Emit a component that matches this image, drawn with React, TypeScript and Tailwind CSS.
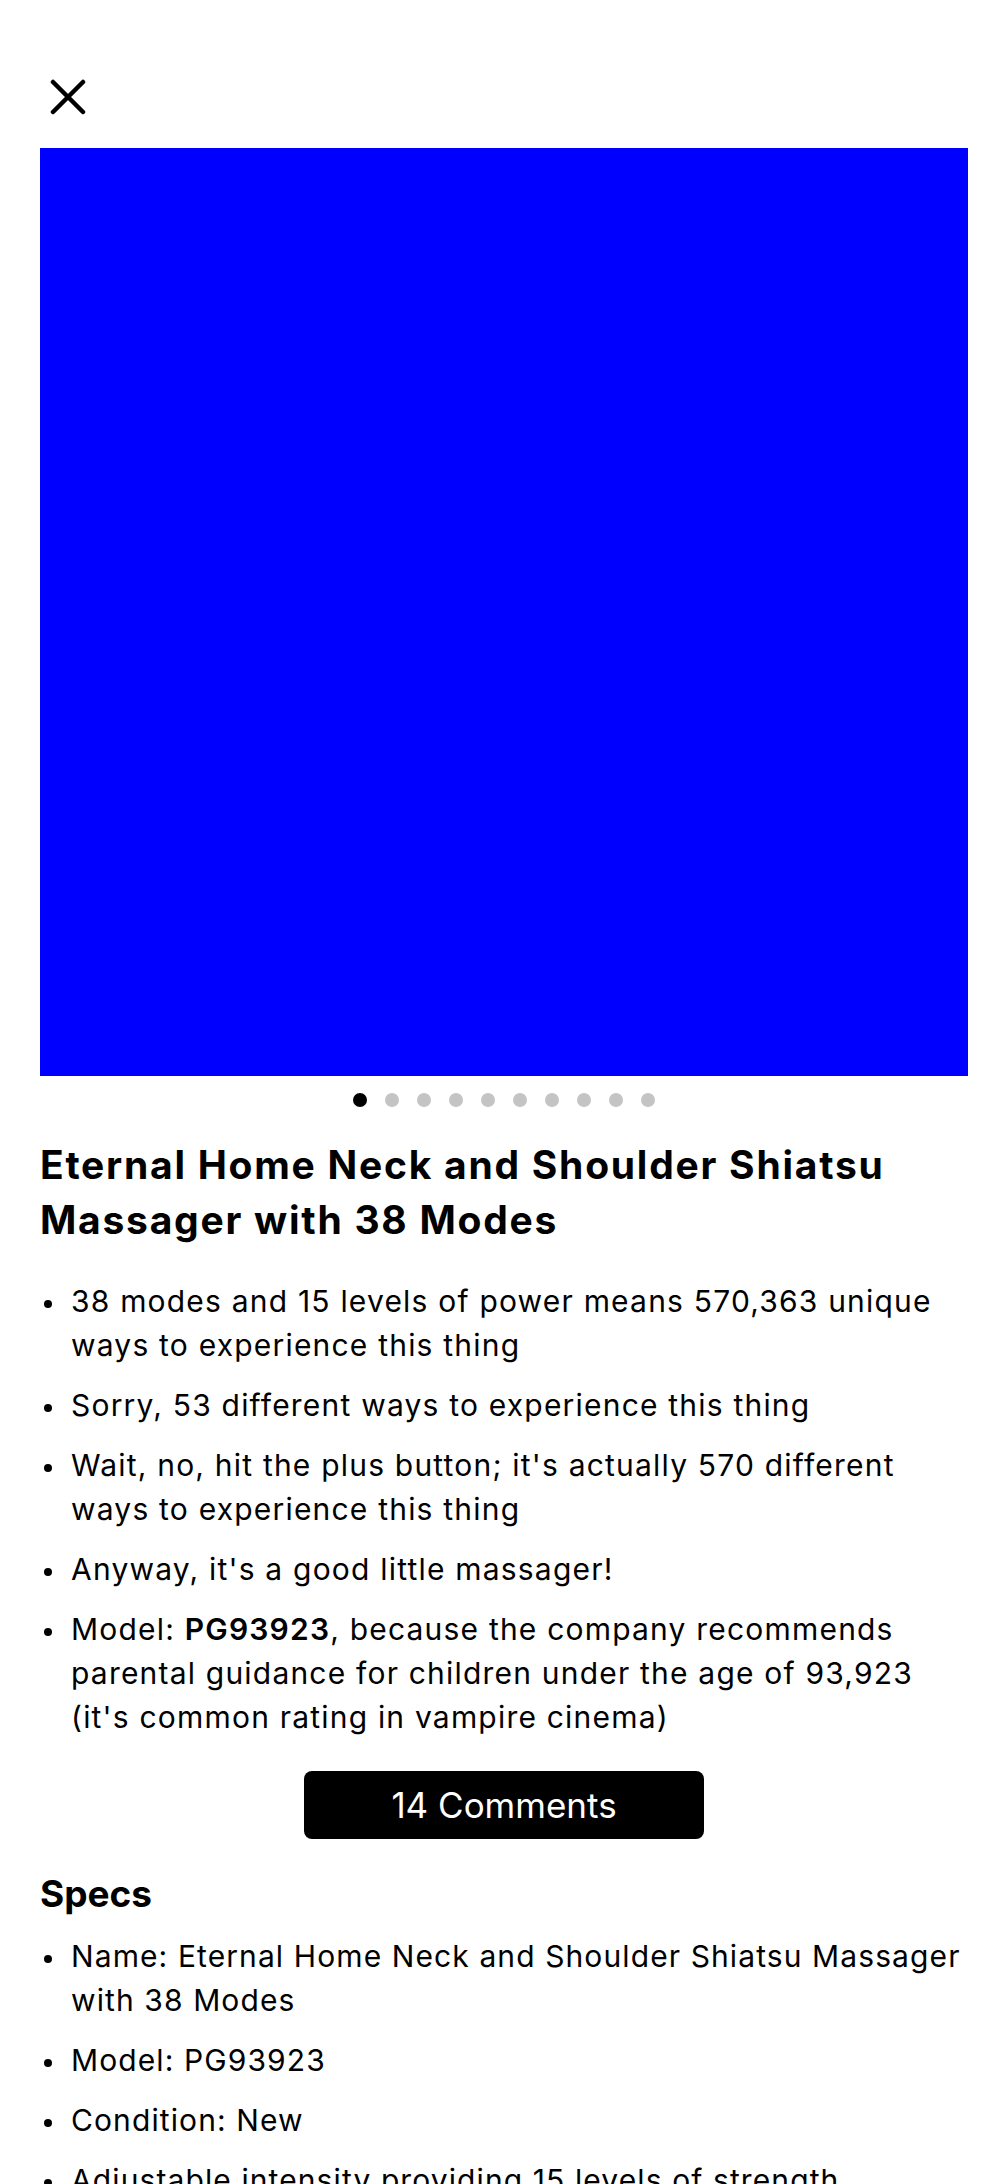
import React from "react";

const Bullet = ({ children }: { children: React.ReactNode }) => (
  <li className="flex">
    <span className="w-[31px] shrink-0">
      <span className="block mt-[21px] ml-[4px] w-[8px] h-[8px] rounded-full bg-black" />
    </span>
    <span className="flex-1">{children}</span>
  </li>
);

export default function App() {
  return (
    <div className="min-h-[2184px] bg-white text-black px-[40px] pt-[79px] font-['Inter','Liberation_Sans',sans-serif]">
      <button className="block w-[36px] h-[36px] ml-[10px]" aria-label="Close">
        <svg viewBox="0 0 36 36" className="w-[36px] h-[36px]">
          <path d="M3 3 L33 33 M33 3 L3 33" stroke="black" strokeWidth="4.5" strokeLinecap="round" fill="none" />
        </svg>
      </button>
      <div className="mt-[33px] w-[928px] h-[928px] bg-[#0000ff]" />
      <div className="flex justify-center gap-[18px] mt-[17px]">
        {Array.from({ length: 10 }).map((_, i) => (
          <span
            key={i}
            className={i === 0 ? "w-[14px] h-[14px] rounded-full bg-black" : "w-[14px] h-[14px] rounded-full bg-[#c4c4c4]"}
          />
        ))}
      </div>
      <h1 className="mt-[30px] text-[39px] leading-[55px] font-bold tracking-[1.75px]">
        Eternal Home Neck and Shoulder Shiatsu Massager with 38 Modes
      </h1>
      <ul className="mt-[32px] flex flex-col gap-[16px] text-[30px] leading-[44px] tracking-[1.2px]">
        <Bullet>38 modes and 15 levels of power means 570,363 unique ways to experience this thing</Bullet>
        <Bullet>Sorry, 53 different ways to experience this thing</Bullet>
        <Bullet>Wait, no, hit the plus button; it's actually 570 different ways to experience this thing</Bullet>
        <Bullet>Anyway, it's a good little massager!</Bullet>
        <Bullet>
          Model: <b className="font-semibold">PG93923</b>, because the company recommends parental guidance for children under the age of 93,923
          <br />
          (it's common rating in vampire cinema)
        </Bullet>
      </ul>
      <div className="flex justify-center mt-[32px]">
        <button className="w-[400px] h-[68px] rounded-[8px] bg-black text-white text-[35px] leading-[68px]">14 Comments</button>
      </div>
      <h2 className="mt-[33px] text-[37px] leading-[44px] font-bold">Specs</h2>
      <ul className="mt-[18px] flex flex-col gap-[16px] text-[30px] leading-[44px] tracking-[1.1px]">
        <Bullet>Name: Eternal Home Neck and Shoulder Shiatsu Massager with 38 Modes</Bullet>
        <Bullet>Model: PG93923</Bullet>
        <Bullet>Condition: New</Bullet>
        <Bullet>Adjustable intensity providing 15 levels of strength</Bullet>
      </ul>
    </div>
  );
}
